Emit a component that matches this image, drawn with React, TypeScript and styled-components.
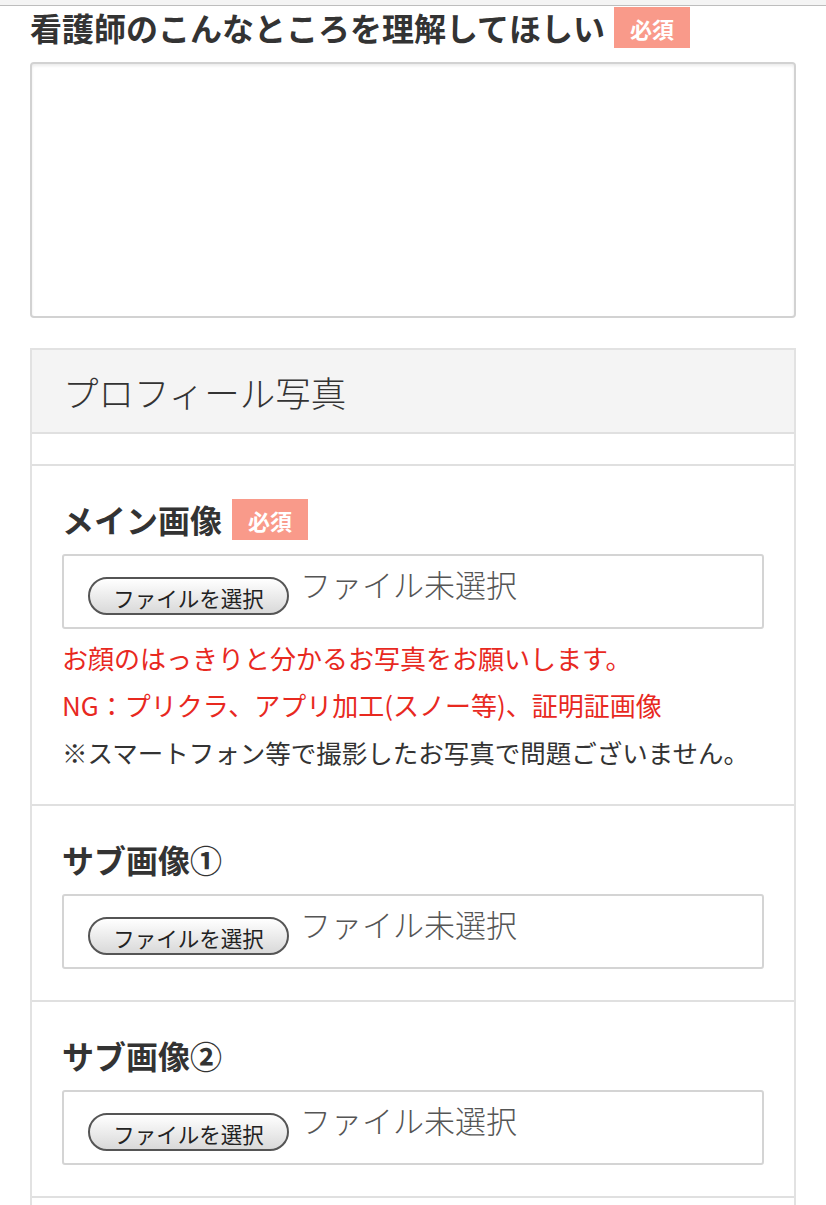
import React from "react";
import styled, { createGlobalStyle } from "styled-components";

const Global = createGlobalStyle`
  html, body { margin: 0; padding: 0; background: #fff; }
  body { font-family: "Noto Sans CJK JP", "Noto Sans", sans-serif; color: #333; }
  * { box-sizing: border-box; }
`;

const TopBar = styled.div`
  height: 6px;
  background: #f4f4f4;
  border-bottom: 1px solid #bdbdbd;
`;

const Page = styled.div`
  padding: 0 30px;
`;

const HeadingRow = styled.div`
  display: flex;
  align-items: center;
  gap: 9px;
  height: 41px;
  margin-top: 1px;
`;

const Heading = styled.h2`
  margin: 0;
  font-size: 32px;
  font-weight: 700;
  line-height: 41px;
  color: #333;
`;

const Badge = styled.span`
  display: inline-flex;
  align-items: center;
  justify-content: center;
  width: 76px;
  height: 41px;
  background: #f99a8a;
  color: #fff;
  font-size: 22px;
  font-weight: 700;
`;

const TextArea = styled.textarea`
  display: block;
  width: 100%;
  height: 256px;
  margin: 14px 0 0;
  border: 2px solid #d2d2d2;
  border-radius: 4px;
  box-shadow: inset 0 2px 3px rgba(0, 0, 0, 0.08);
  resize: none;
  font: inherit;
`;

const Panel = styled.section`
  margin-top: 30px;
  border: 2px solid #e2e2e2;
  border-bottom: none;
`;

const PanelHeader = styled.div`
  height: 84px;
  display: flex;
  align-items: center;
  padding-left: 31px;
  background: #f4f4f4;
  border-bottom: 2px solid #e0e0e0;
`;

const PanelTitle = styled.h3`
  margin: 0;
  font-size: 35.5px;
  font-weight: 300;
  color: #333;
`;

const Spacer = styled.div`
  height: 32px;
  border-bottom: 2px solid #e0e0e0;
`;

const Section = styled.div`
  padding: 33px 30px 31px;
  border-bottom: 2px solid #e0e0e0;
`;

const PanelTail = styled.div`
  height: 40px;
`;

const LabelRow = styled.div`
  display: flex;
  align-items: center;
  gap: 10px;
  height: 41px;
`;

const Label = styled.span`
  font-size: 32px;
  font-weight: 700;
  line-height: 41px;
  color: #333;
`;

const FileBox = styled.div`
  margin-top: 14px;
  height: 75px;
  border: 2px solid #d4d4d4;
  border-radius: 3px;
  display: flex;
  align-items: flex-start;
  padding: 0 24px;
`;

const FileButton = styled.span`
  margin-top: 21px;
  width: 201px;
  height: 38px;
  border: 2px solid #555;
  border-radius: 19px;
  background: linear-gradient(#ffffff, #d9d9d9);
  display: inline-flex;
  align-items: center;
  justify-content: center;
  font-size: 21.5px;
  color: #222;
  padding-top: 3px;
  white-space: nowrap;
`;

const FileName = styled.span`
  margin: 12px 0 0 11px;
  font-size: 31px;
  line-height: 31px;
  font-weight: 300;
  color: #555;
`;

const Notes = styled.div`
  margin-top: 5px;
  margin-bottom: -2px;
`;

const Note = styled.p<{ $red?: boolean }>`
  margin: 0;
  font-size: ${(p) => (p.$red ? "26px" : "25.5px")};
  line-height: 47px;
  color: ${(p) => (p.$red ? "#e8291f" : "#333")};
  white-space: nowrap;
`;

const FileInput = () => (
  <FileBox>
    <FileButton>ファイルを選択</FileButton>
    <FileName>ファイル未選択</FileName>
  </FileBox>
);

export default function App() {
  return (
    <>
      <Global />
      <TopBar />
      <Page>
        <HeadingRow>
          <Heading>看護師のこんなところを理解してほしい</Heading>
          <Badge>必須</Badge>
        </HeadingRow>
        <TextArea />
        <Panel>
          <PanelHeader>
            <PanelTitle>プロフィール写真</PanelTitle>
          </PanelHeader>
          <Spacer />
          <Section>
            <LabelRow>
              <Label>メイン画像</Label>
              <Badge>必須</Badge>
            </LabelRow>
            <FileInput />
            <Notes>
              <Note $red>お顔のはっきりと分かるお写真をお願いします。</Note>
              <Note $red>NG：プリクラ、アプリ加工(スノー等)、証明証画像</Note>
              <Note>※スマートフォン等で撮影したお写真で問題ございません。</Note>
            </Notes>
          </Section>
          <Section>
            <LabelRow>
              <Label>サブ画像①</Label>
            </LabelRow>
            <FileInput />
          </Section>
          <Section>
            <LabelRow>
              <Label>サブ画像②</Label>
            </LabelRow>
            <FileInput />
          </Section>
          <PanelTail />
        </Panel>
      </Page>
    </>
  );
}
